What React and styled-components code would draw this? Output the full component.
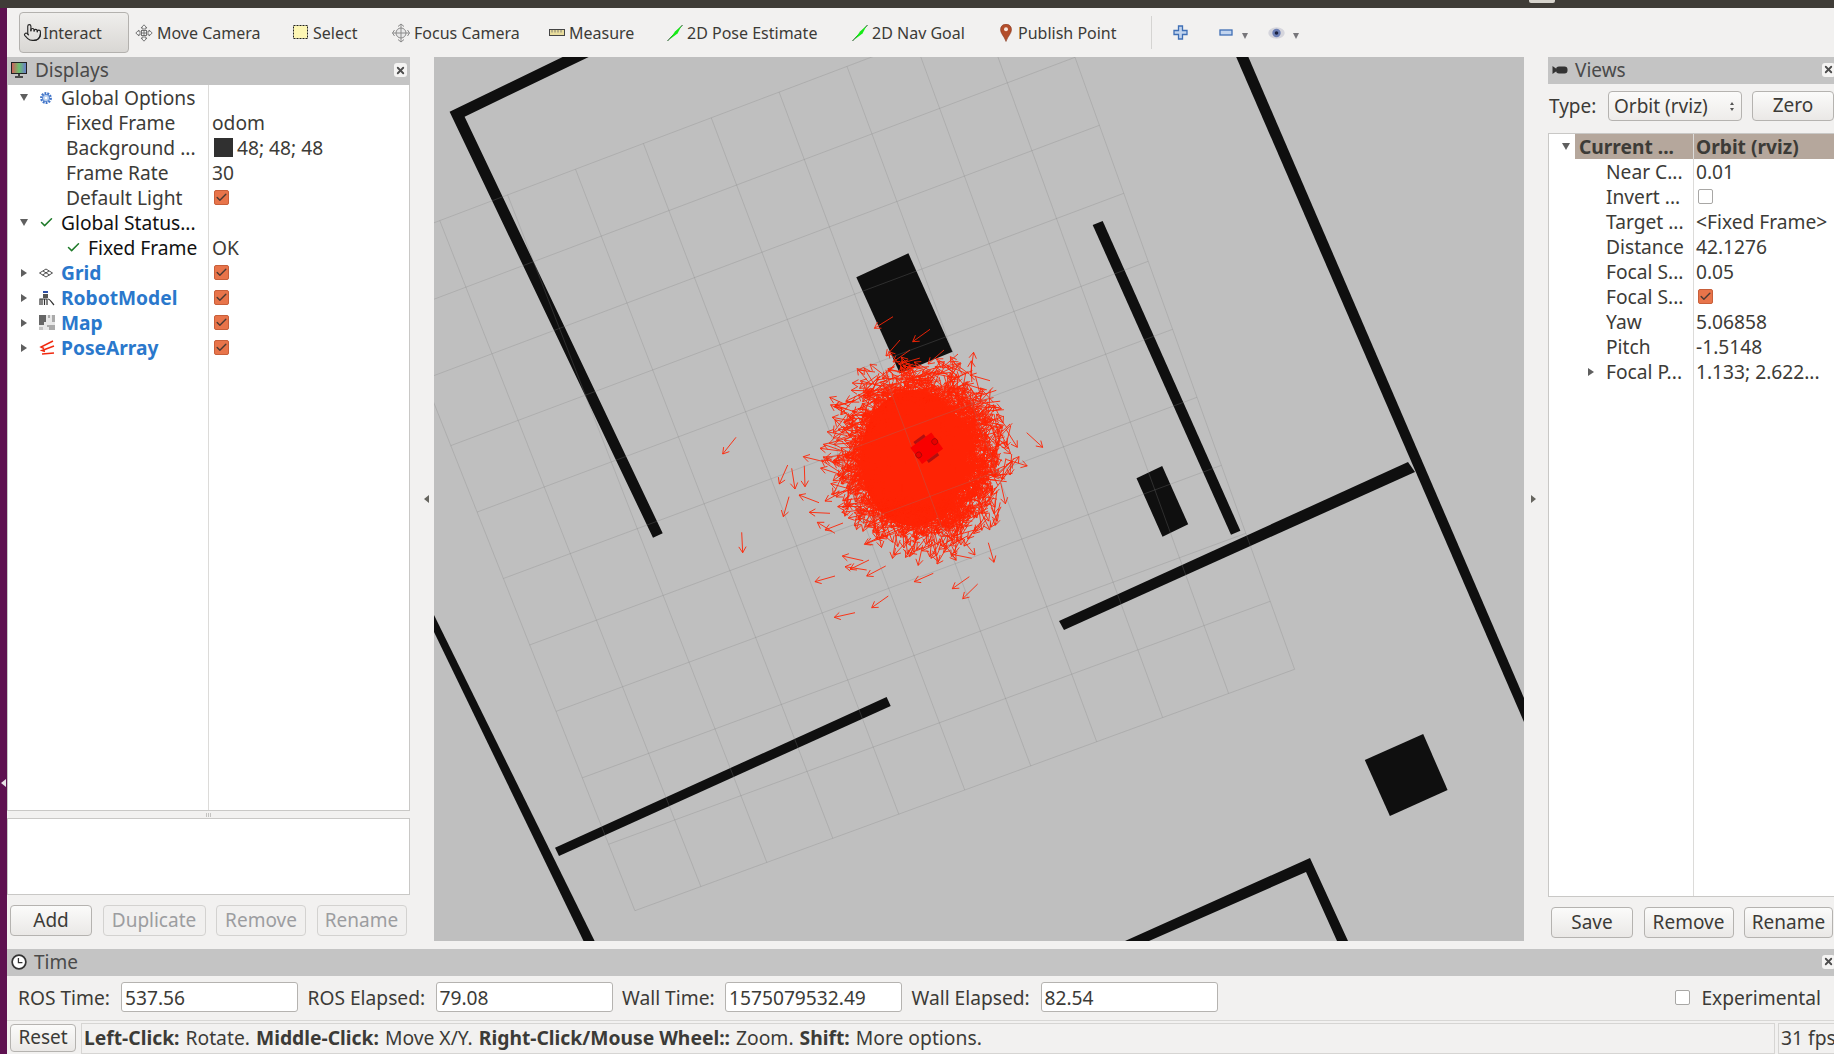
import styled, { createGlobalStyle } from "styled-components"
import { Check, Pointer, X } from "lucide-react"

const GlobalStyle = createGlobalStyle`
  html, body {
    margin: 0;
    padding: 0;
    background: #f2f1f0;
    overflow: hidden;
  }
  * { box-sizing: border-box; }
`

// ---------- map data (page coordinates, the svg viewBox starts at 434,57) ----------

const WALLS = [
  "562.6,57 588.7,57 464.6,116.7 662.7,533.3 653,537.7 449.6,111.7",
  "1236.2,57 1248.4,57 1524,698 1524,722",
  "1408,462 1415,472 1064,630 1059,621",
  "1092.7,225 1102.7,221 1240.4,530.7 1231,534.7",
  "856.3,277.3 908.4,253.3 952.6,351.7 899.8,373.3",
  "1136.5,478.3 1162.2,466 1188.2,524.3 1162.5,536.7",
  "1364.8,760 1423.2,734 1447.6,790 1389.9,816",
  "1125,941 1310,858 1348,941 1337,941 1306,872 1149,941",
  "434,615 594.6,941 583.5,941 434,632",
  "555,847.7 559,856 890.7,706 886.6,697",
]

const OUTLIERS = [
  [736, 437.3, 722.7, 454], [1026.7, 432.7, 1042.7, 447.3], [1006, 429.3, 1017.3, 447.3],
  [1011.7, 454, 1010, 475], [1010, 424, 996.7, 436.7], [741.7, 532.3, 742.7, 552.7],
  [787.7, 465, 779.3, 484], [791.7, 468.3, 795, 489], [804.3, 465.7, 805, 486.7],
  [789, 496.7, 783.3, 516.7], [819, 502.7, 799, 495], [824, 461.7, 803.3, 456.7],
  [840.7, 451, 820, 448.3], [830, 513.3, 809.3, 512.3], [835, 533.3, 817.3, 522.3],
  [843, 523, 825, 530], [863.3, 560.7, 842.3, 556], [869, 560, 850, 569.3],
  [866.7, 570, 845, 566.7], [885.7, 566, 866.7, 576], [835, 576, 815, 581.7],
  [888.3, 596, 871.7, 607.7], [855, 612.7, 834.3, 617.3], [933.3, 573.3, 914.3, 581.7],
  [969.3, 576.7, 952.3, 588.7], [977.7, 584, 962.7, 598.7], [971.7, 558.3, 950.7, 554],
  [988.3, 542.7, 994, 562.3], [1006.7, 481.7, 986.7, 479.3], [990, 380.7, 970, 375],
  [930, 329.3, 912.7, 341.7], [893, 316.7, 874.4, 328.3], [958, 354, 942, 368],
  [900, 340, 886, 356], [875, 372, 858, 370], [910, 350, 893, 362], [944, 350, 928, 364],
]

const mulberry = (seed) => () => {
  seed |= 0
  seed = (seed + 0x6d2b79f5) | 0
  let t = Math.imul(seed ^ (seed >>> 15), 1 | seed)
  t = (t + Math.imul(t ^ (t >>> 7), 61 | t)) ^ t
  return ((t ^ (t >>> 14)) >>> 0) / 4294967296
}

const arrowPath = (x1, y1, x2, y2) => {
  const a = Math.atan2(y2 - y1, x2 - x1)
  const h = 7
  const lx = x2 - h * Math.cos(a - 0.55)
  const ly = y2 - h * Math.sin(a - 0.55)
  const rx = x2 - h * Math.cos(a + 0.55)
  const ry = y2 - h * Math.sin(a + 0.55)
  return `M${x1.toFixed(1)} ${y1.toFixed(1)}L${x2.toFixed(1)} ${y2.toFixed(1)}M${lx.toFixed(1)} ${ly.toFixed(1)}L${x2.toFixed(1)} ${y2.toFixed(1)}L${rx.toFixed(1)} ${ry.toFixed(1)}`
}

const buildParticles = () => {
  const rnd = mulberry(2719)
  const gauss = () => Math.sqrt(-2 * Math.log(rnd() + 1e-6)) * Math.cos(2 * Math.PI * rnd())
  const parts = []
  while (parts.length < 3800) {
    const gx = gauss()
    const gy = gauss()
    if (gx * gx + gy * gy > 7) continue
    const x = 928 + gx * 34
    const y = 452 + gy * 36
    const angle = ((140 + gauss() * 55) * Math.PI) / 180
    const len = 19 + rnd() * 5
    parts.push(arrowPath(x, y, x + Math.cos(angle) * len, y + Math.sin(angle) * len))
  }
  OUTLIERS.forEach((o) => parts.push(arrowPath(o[0], o[1], o[2], o[3])))
  return parts.join("")
}

const buildGrid = () => {
  const bottom = [634.9, 910.7]
  const right = [1294.6, 669.3]
  const left = [371.9, 246.3]
  const top = [1050.6, -10.7]
  const lerp = (a, b, t) => [a[0] + (b[0] - a[0]) * t, a[1] + (b[1] - a[1]) * t]
  let d = ""
  for (let i = 0; i <= 10; i++) {
    const t = i / 10
    const a = lerp(bottom, right, t)
    const b = lerp(left, top, t)
    const c = lerp(bottom, left, t)
    const e = lerp(right, top, t)
    d += `M${a[0]} ${a[1]}L${b[0]} ${b[1]}M${c[0]} ${c[1]}L${e[0]} ${e[1]}`
  }
  return d
}

const PARTICLES = buildParticles()
const GRID = buildGrid()

// ---------- icons ----------

const MoveCameraIcon = () => (
  <svg width="18" height="18" viewBox="0 0 18 18" fill="#f4f4f4" stroke="#6a6a6a" strokeWidth="0.9">
    <path d="M9 0.8L12 4H10V6.5H8V4H6zM9 17.2L12 14H10V11.5H8V14H6zM0.8 9L4 6V8H6.5V10H4V12zM17.2 9L14 6V8H11.5V10H14V12z" />
    <rect x="6.5" y="6.5" width="5" height="5" />
    <path d="M9 6.5V11.5M6.5 9H11.5" />
  </svg>
)

const PoseGoalIcon = () => (
  <svg width="16" height="18" viewBox="0 0 16 18">
    <path d="M0.5 17L15.5 1" stroke="#14561a" strokeWidth="1" />
    <path d="M2.5 15.5L8 7.5L14.5 2L10.5 9.5z" fill="#14ec14" />
  </svg>
)

const SelectIcon = () => (
  <svg width="16" height="17" viewBox="0 0 16 17">
    <rect x="0.5" y="1.5" width="14" height="13" fill="#fdf6b4" stroke="#222" strokeDasharray="2 1" />
  </svg>
)

const FocusIcon = () => (
  <svg width="18" height="20" viewBox="0 0 18 20" fill="none" stroke="#8a8a8a">
    <circle cx="9" cy="10" r="5" fill="#e9e9e9" />
    <path d="M9 1V19M0.5 10H17.5M6 3.5L9 1L12 3.5M6 16.5L9 19L12 16.5M2.5 7L0.5 10L2.5 13M15.5 7L17.5 10L15.5 13" />
  </svg>
)

const MeasureIcon = () => (
  <svg width="16" height="10" viewBox="0 0 16 10">
    <rect x="0.5" y="1.5" width="15" height="6" fill="#e8dc9c" stroke="#444" />
    <path d="M3 2V4.5M6 2V4.5M9 2V4.5M12 2V4.5" stroke="#666" strokeWidth="0.8" />
  </svg>
)

const PinIcon = () => (
  <svg width="12" height="18" viewBox="0 0 12 18">
    <path d="M6 17.5C4 12 0.5 9.5 0.5 5.5A5.5 5.5 0 0 1 11.5 5.5C11.5 9.5 8 12 6 17.5z" fill="#b34e2b" stroke="#7a2f17" strokeWidth="0.5" />
    <circle cx="6" cy="5.3" r="2" fill="#f6e4da" />
  </svg>
)

const PlusIcon = () => (
  <svg width="15" height="15" viewBox="0 0 15 15">
    <path d="M5.5 1H9.5V5.5H14V9.5H9.5V14H5.5V9.5H1V5.5H5.5z" fill="#c2d4ee" stroke="#3f6fb5" strokeWidth="1.3" />
  </svg>
)

const MinusIcon = () => (
  <svg width="14" height="7" viewBox="0 0 14 7">
    <rect x="1" y="1" width="12" height="5" fill="#c2d4ee" stroke="#3f6fb5" strokeWidth="1.3" />
  </svg>
)

const EyeIcon = () => (
  <svg width="17" height="12" viewBox="0 0 17 12">
    <ellipse cx="8.5" cy="6" rx="8.2" ry="5.8" fill="#d5d5dc" />
    <circle cx="8.5" cy="6" r="4.2" fill="#6c7fb5" />
    <circle cx="8.5" cy="6" r="1.8" fill="#1c2340" />
  </svg>
)

const MonitorIcon = () => (
  <svg width="17" height="17" viewBox="0 0 17 17">
    <defs>
      <linearGradient id="screenGrad" x1="0" x2="1" y1="0" y2="0">
        <stop offset="0" stopColor="#d25a5a" />
        <stop offset="0.5" stopColor="#6cc06c" />
        <stop offset="1" stopColor="#6a78d0" />
      </linearGradient>
    </defs>
    <rect x="0.5" y="0.5" width="15" height="11" fill="url(#screenGrad)" stroke="#222" />
    <path d="M8 12V14M4 15H12" stroke="#222" strokeWidth="1.6" />
  </svg>
)

const GearIcon = () => (
  <svg width="14" height="14" viewBox="0 0 14 14">
    <circle cx="7" cy="7" r="4.6" fill="none" stroke="#3f73c8" strokeWidth="2.6" strokeDasharray="1.8 1" />
    <circle cx="7" cy="7" r="3.6" fill="#bcd2f0" stroke="#3f73c8" strokeWidth="0.8" />
    <circle cx="7" cy="7" r="1.3" fill="#fff" />
  </svg>
)

const GridIcon = () => (
  <svg width="14" height="10" viewBox="0 0 14 10" fill="none" stroke="#3c3c3c" strokeWidth="0.9">
    <path d="M7 1L13.5 5L7 9L0.5 5zM4 3L10.5 7M10 3L3.5 7" />
  </svg>
)

const RobotIcon = () => (
  <svg width="16" height="16" viewBox="0 0 16 16">
    <rect x="4" y="1" width="5" height="2" fill="#2f50a8" />
    <rect x="4" y="4" width="5" height="4" fill="#555" />
    <path d="M1 15V9H8V15M3 9V15M5.5 9V15" fill="none" stroke="#333" strokeWidth="1.2" />
    <path d="M9 9C11 9 12 12 15 15" fill="none" stroke="#333" strokeWidth="1.2" />
  </svg>
)

const MapIcon = () => (
  <svg width="16" height="15" viewBox="0 0 16 15">
    <rect width="16" height="15" fill="#e8e8e8" />
    <path d="M0 0H7V7H5V10H0z" fill="#666" />
    <path d="M9 0H11V3H9zM13 0H16V7H13zM8 10H16V15H10V12H8z" fill="#aaa" />
    <path d="M0 12H4V15H0z" fill="#c4c4c4" />
  </svg>
)

const PoseArrayIcon = () => (
  <svg width="16" height="15" viewBox="0 0 16 15" fill="none" stroke="#f02a10" strokeWidth="1.5">
    <path d="M14 1L2 7L5 8.5M15 6L3 10.5L6 11.5M15 13L3 14" />
  </svg>
)

const CameraIcon = () => (
  <svg width="16" height="10" viewBox="0 0 16 10">
    <path d="M0.5 1L4 3.5V6.5L0.5 9z" fill="#333" />
    <rect x="4" y="1.5" width="11.5" height="7" rx="3" fill="#333" />
  </svg>
)

const ClockIcon = () => (
  <svg width="16" height="16" viewBox="0 0 14 14">
    <circle cx="7" cy="7" r="6" fill="#fff" stroke="#333" strokeWidth="1.5" />
    <path d="M6.5 3.5V7.5H10" fill="none" stroke="#333" strokeWidth="1.1" />
  </svg>
)

// ---------- page ----------

const Page = styled.div`
  width: 1834px;
  height: 1054px;
  overflow: hidden;
  display: flex;
  flex-direction: column;
  background: #f2f1f0;
  font-family: "Noto Sans", "Liberation Sans", sans-serif;
  color: #3c3b37;
`

const TopStrip = styled.div`
  height: 8px;
  flex: none;
  background: #3f3c37;
  display: flex;
`

const TopTab = styled.div`
  width: 26px;
  height: 3px;
  margin-left: 1529px;
  border-radius: 0 0 2px 2px;
  background: #d6d3cc;
`

const Body = styled.div`
  flex: 1;
  display: flex;
  min-height: 0;
  position: relative;
`

const Launcher = styled.div`
  width: 7px;
  flex: none;
  background: #5e1150;
`

const LauncherArrow = styled.div`
  position: absolute;
  left: 1px;
  top: 771px;
  border-style: solid;
  border-width: 4px 5px 4px 0;
  border-color: transparent #e8e2e6 transparent transparent;
`

const Window = styled.div`
  flex: 1;
  min-width: 0;
  display: flex;
  flex-direction: column;
`

const Toolbar = styled.div`
  height: 49px;
  flex: none;
  display: flex;
  align-items: center;
  padding-left: 12px;
  font-size: 16px;
`

const InteractButton = styled.div`
  width: 110px;
  height: 41px;
  display: flex;
  align-items: center;
  gap: 1px;
  padding-left: 3px;
  margin-right: 6px;
  border: 1px solid #b3b1ae;
  border-radius: 4px;
  background: linear-gradient(#efeeec, #d9d7d4);
`

const ToolItem = styled.div`
  width: ${(p) => p.$w}px;
  flex: none;
  display: flex;
  align-items: center;
  gap: ${(p) => p.$gap ?? 4}px;
  white-space: nowrap;
`

const ToolSeparator = styled.div`
  width: 1px;
  height: 33px;
  margin-right: 21px;
  background: #d5d4d2;
`

const DropArrow = styled.div`
  width: 0;
  height: 0;
  margin-top: 6px;
  border-style: solid;
  border-width: 6px 3.5px 0 3.5px;
  border-color: #77767a transparent transparent transparent;
`

const Main = styled.div`
  height: 892px;
  flex: none;
  padding-bottom: 8px;
  display: flex;
`

const LeftDock = styled.div`
  width: 403px;
  flex: none;
  display: flex;
  flex-direction: column;
`

const RightDock = styled.div`
  width: 286px;
  flex: none;
  display: flex;
  flex-direction: column;
`

const TitleBar = styled.div`
  height: ${(p) => p.$h || 28}px;
  flex: none;
  display: flex;
  align-items: center;
  gap: 7px;
  padding: 0 0 2px 4px;
  background: #c4c4c4;
  font-size: 19px;
  color: #4a4a4a;
`

const CloseBox = styled.div`
  width: 13px;
  height: 14px;
  margin-left: auto;
  margin-right: ${(p) => p.$mr ?? 3}px;
  display: flex;
  align-items: center;
  justify-content: center;
  background: #f5f4f3;
  border-radius: 3px;
  color: #4d4d4d;
`

const TreeFrame = styled.div`
  height: ${(p) => p.$h}px;
  flex: none;
  position: relative;
  background: #fff;
  border: 1px solid #c9c8c6;
  border-top: ${(p) => (p.$flush ? "none" : "1px solid #c9c8c6")};
  border-right: ${(p) => (p.$open ? "none" : "1px solid #c9c8c6")};
  overflow: hidden;
`

const ColumnLine = styled.div`
  position: absolute;
  left: ${(p) => p.$x}px;
  top: 0;
  bottom: 0;
  width: 1px;
  background: #dcdbd9;
`

const TreeRow = styled.div`
  height: 25px;
  display: flex;
  align-items: center;
  font-size: 19.2px;
  white-space: nowrap;
`

const NameCell = styled.div`
  width: ${(p) => p.$w}px;
  flex: none;
  display: flex;
  align-items: center;
  padding-left: ${(p) => p.$pad}px;
  overflow: hidden;
  color: ${(p) => (p.$tone === "blue" ? "#2a78cc" : p.$tone === "black" ? "#111" : "#3c3b37")};
  font-weight: ${(p) => (p.$tone === "blue" || p.$head ? 700 : 400)};
`

const ValueCell = styled.div`
  display: flex;
  align-items: center;
  gap: 2px;
  padding-left: 3px;
  font-weight: ${(p) => (p.$head ? 700 : 400)};
`

const HeadGutter = styled.div`
  width: 26px;
  flex: none;
  display: flex;
  padding-left: 13px;
`

const HeadBand = styled.div`
  flex: 1;
  height: 25px;
  display: flex;
  align-items: center;
  background: #b5a79c;
`

const Expander = styled.div`
  width: 0;
  height: 0;
  flex: none;
  border-style: solid;
  border-width: ${(p) => (p.$open ? "7px 4.5px 0 4.5px" : "4.5px 0 4.5px 6px")};
  border-color: ${(p) =>
    p.$open ? "#5f5f5f transparent transparent transparent" : "transparent transparent transparent #5f5f5f"};
  margin-left: ${(p) => (p.$open ? 0 : 1)}px;
  margin-right: ${(p) => (p.$open ? 11 : 12)}px;
`

const RowIcon = styled.div`
  width: 22px;
  flex: none;
  display: flex;
  align-items: center;
  color: #1f7a2a;
`

const CheckBox = styled.div`
  width: 15px;
  height: 15px;
  margin-left: 2px;
  display: flex;
  align-items: center;
  justify-content: center;
  border-radius: 2px;
  background: ${(p) => (p.$on ? "#e8744a" : "#fff")};
  border: 1px solid ${(p) => (p.$on ? "#c85f3a" : "#a8a7a5")};
  color: #4a3a34;
`

const Swatch = styled.div`
  width: 19px;
  height: 19px;
  margin: 0 2px 0 2px;
  background: #303030;
`

const SplitHandle = styled.div`
  height: 7px;
  flex: none;
  display: flex;
  justify-content: center;
  align-items: center;
  gap: 1px;
`

const HandleDot = styled.div`
  width: 1px;
  height: 4px;
  background: #c4c3c1;
`

const ButtonRow = styled.div`
  display: flex;
  margin-top: ${(p) => p.$mt}px;
  padding-left: ${(p) => p.$pl}px;
`

const Button = styled.div`
  width: ${(p) => p.$w}px;
  height: 31px;
  flex: none;
  margin-right: ${(p) => p.$mr ?? 10.5}px;
  padding-bottom: 2px;
  display: flex;
  align-items: center;
  justify-content: center;
  font-size: 19px;
  border-radius: 4px;
  border: 1px solid ${(p) => (p.$off ? "#d3d2d0" : "#b5b3b0")};
  background: ${(p) => (p.$off ? "#f1f0ef" : "linear-gradient(#fbfbfa, #eae8e6)")};
  color: ${(p) => (p.$off ? "#9c9da0" : "#3c3b37")};
`

const Gutter = styled.div`
  width: ${(p) => p.$w}px;
  flex: none;
  display: flex;
  align-items: center;
  justify-content: center;
`

const GutterArrow = styled.div`
  border-style: solid;
  margin-left: ${(p) => (p.$dir === "left" ? 9 : 0)}px;
  margin-right: ${(p) => (p.$dir === "left" ? 0 : 5)}px;
  border-width: ${(p) => (p.$dir === "left" ? "4px 5px 4px 0" : "4px 0 4px 5px")};
  border-color: ${(p) =>
    p.$dir === "left"
      ? "transparent #66655f transparent transparent"
      : "transparent transparent transparent #66655f"};
`

const MapView = styled.svg`
  width: 1090px;
  height: 884px;
  flex: none;
  display: block;
  background: #bfbfbf;
`

const TypeRow = styled.div`
  height: 49px;
  flex: none;
  display: flex;
  align-items: center;
  padding: 0 0 5px 1px;
  font-size: 19px;
`

const TypeLabel = styled.div`
  width: 59px;
  flex: none;
`

const Combo = styled.div`
  width: 134px;
  height: 30px;
  flex: none;
  margin-right: 10px;
  display: flex;
  align-items: center;
  justify-content: space-between;
  padding: 0 7px 0 5px;
  border: 1px solid #b5b3b0;
  border-radius: 4px;
  background: linear-gradient(#fbfbfa, #eeecea);
`

const Spinner = styled.div`
  display: flex;
  flex-direction: column;
  gap: 3px;
`

const SpinArrow = styled.div`
  border-style: solid;
  border-width: ${(p) => (p.$up ? "0 2.5px 3.5px 2.5px" : "3.5px 2.5px 0 2.5px")};
  border-color: ${(p) =>
    p.$up ? "transparent transparent #555 transparent" : "#555 transparent transparent transparent"};
`

const ZeroButton = styled(Button)`
  height: 30px;
  margin-right: 0;
`

const TimeRow = styled.div`
  height: 44px;
  flex: none;
  display: flex;
  align-items: center;
  padding: 0 13px 2px 11px;
  font-size: 19.2px;
`

const TimeLabel = styled.div`
  width: ${(p) => p.$w}px;
  flex: none;
  white-space: nowrap;
`

const TimeInput = styled.div`
  width: 177px;
  height: 30px;
  flex: none;
  margin-right: 9.5px;
  padding-left: 3px;
  display: flex;
  align-items: center;
  background: #fff;
  border: 1px solid #b5b3b0;
  border-radius: 3px;
`

const Experimental = styled.div`
  margin-left: auto;
  display: flex;
  align-items: center;
  gap: 11px;
`

const StatusBar = styled.div`
  flex: 1;
  display: flex;
  align-items: stretch;
  gap: 3px;
  padding: 2px 0 1px 3px;
  border-top: 1px solid #d8d7d5;
  font-size: 19.3px;
`

const ResetButton = styled(Button)`
  width: 66px;
  height: 28px;
  margin: 1px 2px 0 0;
`

const StatusText = styled.div`
  width: 1694px;
  flex: none;
  display: flex;
  align-items: center;
  gap: 6px;
  padding: 0 0 2px 2px;
  border: 1px solid #d6d5d3;
  white-space: nowrap;
`

const StatusFps = styled.div`
  flex: 1;
  display: flex;
  align-items: center;
  padding: 0 0 2px 2px;
  border: 1px solid #d6d5d3;
  border-right: none;
  white-space: nowrap;
  overflow: hidden;
`

const Hint = styled.span`
  font-weight: ${(p) => (p.$b ? 700 : 400)};
`

const tools = [
  { w: 158, icon: <MoveCameraIcon />, label: "Move Camera" },
  { w: 99, icon: <SelectIcon />, label: "Select" },
  { w: 157, icon: <FocusIcon />, label: "Focus Camera" },
  { w: 118, icon: <MeasureIcon />, label: "Measure" },
  { w: 185, icon: <PoseGoalIcon />, label: "2D Pose Estimate" },
  { w: 148, icon: <PoseGoalIcon />, label: "2D Nav Goal" },
  { w: 151, icon: <PinIcon />, label: "Publish Point", gap: 6 },
]

const displayRows = [
  { pad: 12, open: true, icon: <GearIcon />, name: "Global Options" },
  { pad: 58, name: "Fixed Frame", value: "odom" },
  { pad: 58, name: "Background ...", swatch: true, value: "48; 48; 48" },
  { pad: 58, name: "Frame Rate", value: "30" },
  { pad: 58, name: "Default Light", check: true },
  { pad: 12, open: true, icon: <Check size={15} strokeWidth={2.4} />, name: "Global Status...", tone: "black" },
  { pad: 58, icon: <Check size={15} strokeWidth={2.4} />, name: "Fixed Frame", tone: "black", value: "OK" },
  { pad: 12, closed: true, icon: <GridIcon />, name: "Grid", tone: "blue", check: true },
  { pad: 12, closed: true, icon: <RobotIcon />, name: "RobotModel", tone: "blue", check: true },
  { pad: 12, closed: true, icon: <MapIcon />, name: "Map", tone: "blue", check: true },
  { pad: 12, closed: true, icon: <PoseArrayIcon />, name: "PoseArray", tone: "blue", check: true },
]

const viewRows = [
  { name: "Near C...", value: "0.01" },
  { name: "Invert ...", box: true },
  { name: "Target ...", value: "<Fixed Frame>" },
  { name: "Distance", value: "42.1276" },
  { name: "Focal S...", value: "0.05" },
  { name: "Focal S...", check: true },
  { name: "Yaw", value: "5.06858" },
  { name: "Pitch", value: "-1.5148" },
  { name: "Focal P...", value: "1.133; 2.622...", closed: true },
]

const DockRow = ({ row, width }) => (
  <TreeRow>
    <NameCell $w={width} $pad={row.pad} $tone={row.tone}>
      {row.open && <Expander $open />}
      {row.closed && <Expander />}
      {row.icon && <RowIcon>{row.icon}</RowIcon>}
      {row.name}
    </NameCell>
    <ValueCell>
      {row.swatch && <Swatch />}
      {row.check && (
        <CheckBox $on>
          <Check size={13} strokeWidth={2.6} />
        </CheckBox>
      )}
      {row.value}
    </ValueCell>
  </TreeRow>
)

export default function App() {
  return (
    <Page>
      <GlobalStyle />
      <TopStrip>
        <TopTab />
      </TopStrip>
      <Body>
        <Launcher />
        <LauncherArrow />
        <Window>
          <Toolbar>
            <InteractButton>
              <Pointer size={19} strokeWidth={1.4} color="#222" />
              Interact
            </InteractButton>
            {tools.map((t) => (
              <ToolItem key={t.label} $w={t.w} $gap={t.gap}>
                {t.icon}
                {t.label}
              </ToolItem>
            ))}
            <ToolSeparator />
            <ToolItem $w={46}>
              <PlusIcon />
            </ToolItem>
            <ToolItem $w={49} $gap={9}>
              <MinusIcon />
              <DropArrow />
            </ToolItem>
            <ToolItem $w={40} $gap={8}>
              <EyeIcon />
              <DropArrow />
            </ToolItem>
          </Toolbar>
          <Main>
            <LeftDock>
              <TitleBar>
                <MonitorIcon />
                Displays
                <CloseBox>
                  <X size={11} strokeWidth={4} />
                </CloseBox>
              </TitleBar>
              <TreeFrame $h={726} $flush>
                <ColumnLine $x={200} />
                {displayRows.map((r) => (
                  <DockRow key={r.name + r.pad + r.tone} row={r} width={201} />
                ))}
              </TreeFrame>
              <SplitHandle>
                <HandleDot />
                <HandleDot />
                <HandleDot />
              </SplitHandle>
              <TreeFrame $h={77} />
              <ButtonRow $mt={10} $pl={3}>
                <Button $w={82}>Add</Button>
                <Button $w={103} $off>Duplicate</Button>
                <Button $w={90} $off>Remove</Button>
                <Button $w={90} $off $mr={0}>Rename</Button>
              </ButtonRow>
            </LeftDock>
            <Gutter $w={24}>
              <GutterArrow $dir="left" />
            </Gutter>
            <MapView viewBox="434 57 1090 884" preserveAspectRatio="none">
              {WALLS.map((points) => (
                <polygon key={points} points={points} fill="#0f0f0f" />
              ))}
              <ellipse cx="913" cy="458" rx="52" ry="68" fill="#ff1e00" />
              <path d={PARTICLES} fill="none" stroke="#ff2405" strokeWidth="0.9" />
              <path d={GRID} fill="none" stroke="#808080" strokeOpacity="0.28" strokeWidth="1" />
              <g transform="translate(926.7 448.3) rotate(-36)">
                <rect x="-13" y="-10" width="26" height="20" fill="#f80000" />
                <rect x="-7" y="-13" width="13" height="3" fill="#b01010" />
                <rect x="-7" y="10" width="13" height="3" fill="#b01010" />
                <circle cx="10.4" cy="-0.7" r="3" fill="#e80000" stroke="#a00808" strokeWidth="0.8" />
                <circle cx="-10.4" cy="0.7" r="3" fill="#e80000" stroke="#a00808" strokeWidth="0.8" />
              </g>
            </MapView>
            <Gutter $w={24}>
              <GutterArrow $dir="right" />
            </Gutter>
            <RightDock>
              <TitleBar $h={27}>
                <CameraIcon />
                Views
                <CloseBox $mr={-1}>
                  <X size={11} strokeWidth={4} />
                </CloseBox>
              </TitleBar>
              <TypeRow>
                <TypeLabel>Type:</TypeLabel>
                <Combo>
                  Orbit (rviz)
                  <Spinner>
                    <SpinArrow $up />
                    <SpinArrow />
                  </Spinner>
                </Combo>
                <ZeroButton $w={82}>Zero</ZeroButton>
              </TypeRow>
              <TreeFrame $h={764} $open>
                <ColumnLine $x={144} />
                <TreeRow>
                  <HeadGutter>
                    <Expander $open />
                  </HeadGutter>
                  <HeadBand>
                    <NameCell $w={118} $pad={4} $head>
                      Current ...
                    </NameCell>
                    <ValueCell $head>Orbit (rviz)</ValueCell>
                  </HeadBand>
                </TreeRow>
                {viewRows.map((r) => (
                  <TreeRow key={r.name + (r.value || r.check)}>
                    <NameCell $w={144} $pad={r.closed ? 38 : 57}>
                      {r.closed && <Expander />}
                      {r.name}
                    </NameCell>
                    <ValueCell>
                      {r.box && <CheckBox />}
                      {r.check && (
                        <CheckBox $on>
                          <Check size={13} strokeWidth={2.6} />
                        </CheckBox>
                      )}
                      {r.value}
                    </ValueCell>
                  </TreeRow>
                ))}
              </TreeFrame>
              <ButtonRow $mt={10} $pl={3}>
                <Button $w={82}>Save</Button>
                <Button $w={90}>Remove</Button>
                <Button $w={89} $mr={0}>Rename</Button>
              </ButtonRow>
            </RightDock>
          </Main>
          <TitleBar $h={27}>
            <ClockIcon />
            Time
            <CloseBox $mr={-1}>
              <X size={11} strokeWidth={4} />
            </CloseBox>
          </TitleBar>
          <TimeRow>
            <TimeLabel $w={103}>ROS Time:</TimeLabel>
            <TimeInput>537.56</TimeInput>
            <TimeLabel $w={128}>ROS Elapsed:</TimeLabel>
            <TimeInput>79.08</TimeInput>
            <TimeLabel $w={103}>Wall Time:</TimeLabel>
            <TimeInput>1575079532.49</TimeInput>
            <TimeLabel $w={129}>Wall Elapsed:</TimeLabel>
            <TimeInput>82.54</TimeInput>
            <Experimental>
              <CheckBox />
              Experimental
            </Experimental>
          </TimeRow>
          <StatusBar>
            <ResetButton $w={66}>Reset</ResetButton>
            <StatusText>
              <Hint $b>Left-Click:</Hint>
              <Hint>Rotate.</Hint>
              <Hint $b>Middle-Click:</Hint>
              <Hint>Move X/Y.</Hint>
              <Hint $b>Right-Click/Mouse Wheel::</Hint>
              <Hint>Zoom.</Hint>
              <Hint $b>Shift:</Hint>
              <Hint>More options.</Hint>
            </StatusText>
            <StatusFps>31 fps</StatusFps>
          </StatusBar>
        </Window>
      </Body>
    </Page>
  )
}
